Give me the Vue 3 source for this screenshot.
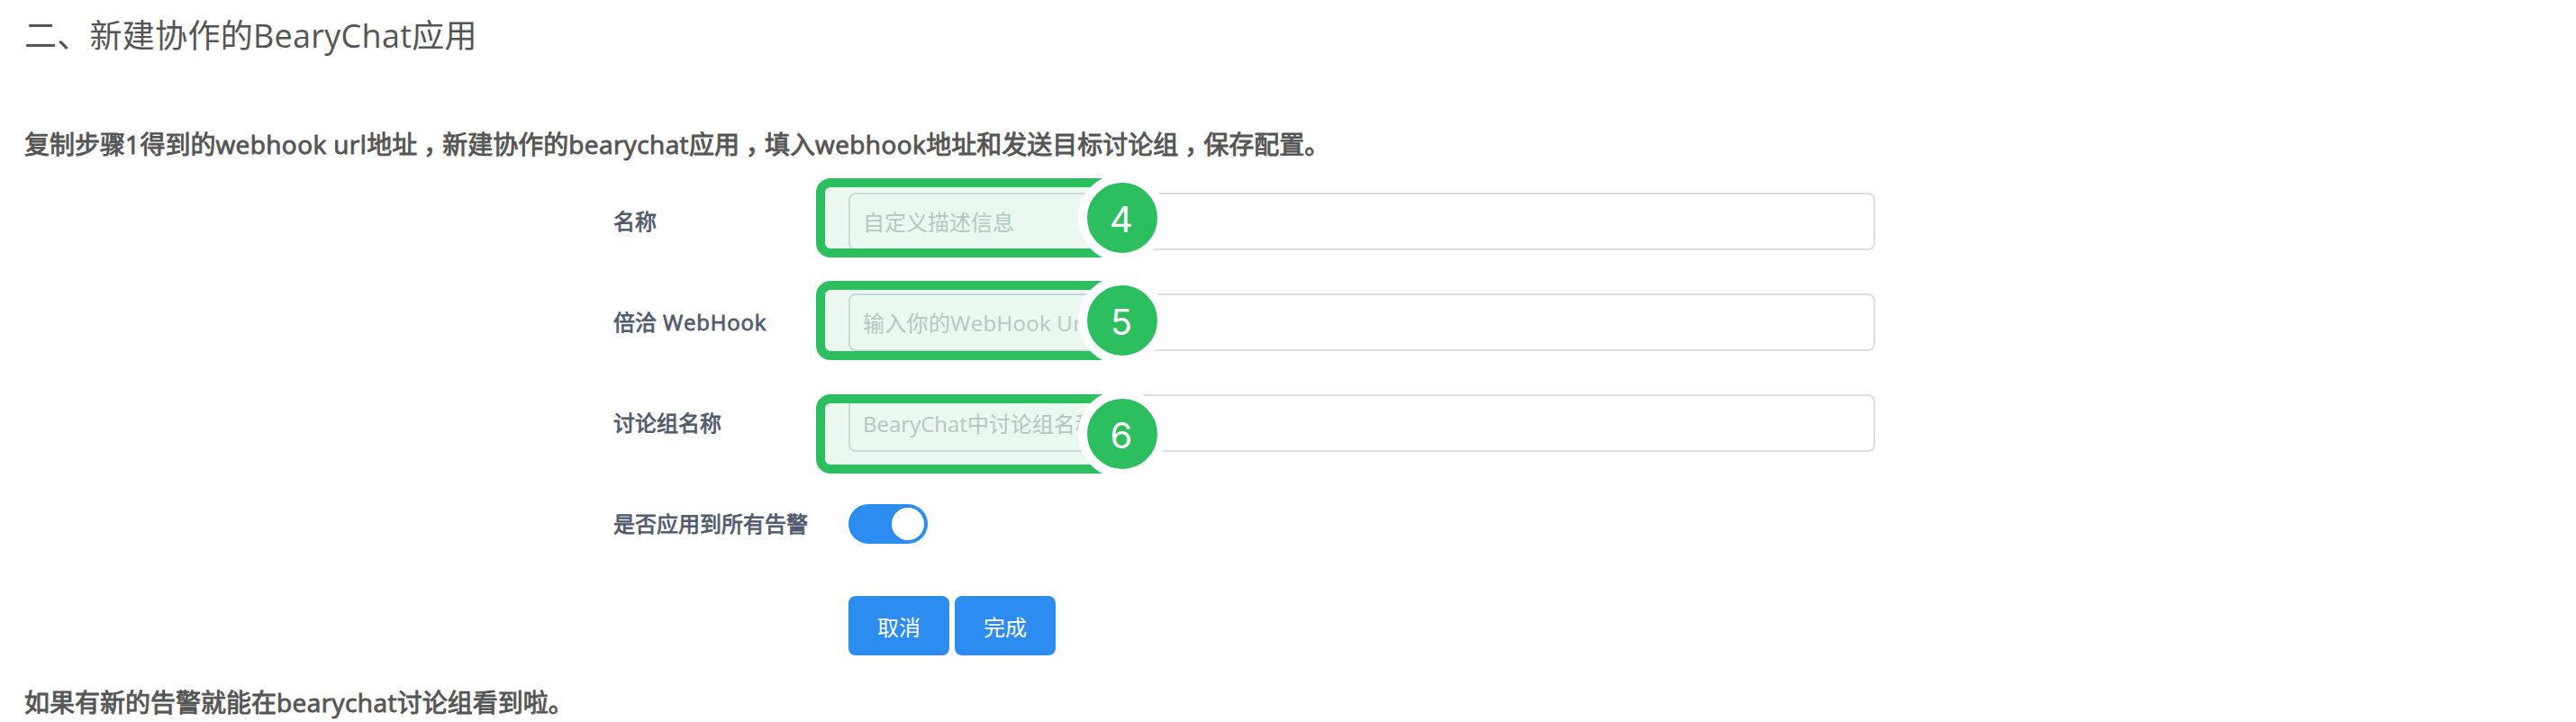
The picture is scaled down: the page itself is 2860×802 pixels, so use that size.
<script setup>
import { ref } from 'vue'

const fields = [
  { cjk: '名称', latin: '', placeholder: '自定义描述信息', step: 4 },
  { cjk: '倍洽', latin: ' WebHook', placeholder: '输入你的WebHook Url', step: 5 },
  { cjk: '讨论组名称', latin: '', placeholder: 'BearyChat中讨论组名称', step: 6 },
]
const applyAll = ref(true)
</script>

<template>
  <main class="page">
    <h2 class="title">二、新建协作的BearyChat应用</h2>
    <p class="note intro">复制步骤<span class="latin">1</span>得到的<span class="latin">webhook url</span>地址<span class="comma">，</span>新建协作的<span class="latin">bearychat</span>应用<span class="comma">，</span>填入<span class="latin">webhook</span>地址和发送目标讨论组<span class="comma">，</span>保存配置。</p>

    <form class="form" @submit.prevent>
      <div v-for="f in fields" :key="f.step" class="row">
        <label class="label">{{ f.cjk }}<span class="latin">{{ f.latin }}</span></label>
        <div class="control">
          <input class="input" :class="{ spaced: f.latin }" type="text" :placeholder="f.placeholder" />
          <div class="callout" :class="'step-' + f.step">
            <span class="badge">{{ f.step }}</span>
          </div>
        </div>
      </div>
      <div class="row">
        <label class="label">是否应用到所有告警</label>
        <button type="button" class="switch" :class="{ on: applyAll }" @click="applyAll = !applyAll">
          <span class="knob"></span>
        </button>
      </div>
      <div class="actions">
        <button type="button" class="btn">取消</button>
        <button type="button" class="btn">完成</button>
      </div>
    </form>

    <p class="note outro">如果有新的告警就能在<span class="latin">bearychat</span>讨论组看到啦。</p>
  </main>
</template>

<style>
body {
  margin: 0;
  background: #fff;
}
</style>

<style scoped>
.page {
  box-sizing: border-box;
  width: 2860px;
  height: 802px;
  padding: 20px 27px 0;
  overflow: hidden;
  background: #fff;
  color: #555;
  font-family: 'Open Sans', 'Noto Sans CJK SC', sans-serif;
  font-kerning: none;
}
.title {
  margin: 0;
  font-size: 36px;
  font-weight: 400;
  line-height: 40px;
  letter-spacing: 0.28px;
}
.note {
  margin: 0;
  font-size: 28px;
  line-height: 40px;
  white-space: nowrap;
  -webkit-text-stroke: 0.9px currentColor;
}
.note .latin {
  letter-spacing: 0.42px;
}
.intro {
  margin-top: 80px;
}
.comma {
  margin: 0 7px;
  font-feature-settings: 'halt';
}
.form {
  width: 1400px;
  margin: 34px 0 0 654px;
}
.row {
  display: grid;
  grid-template-columns: 261px 1140px;
  align-items: center;
  height: 64px;
  margin-bottom: 48px;
}
.label {
  color: #515a6e;
  font-size: 24px;
  line-height: 64px;
  white-space: pre;
  -webkit-text-stroke: 0.8px currentColor;
}
.label .latin {
  letter-spacing: 0.8px;
}
.control {
  position: relative;
  height: 64px;
}
.input {
  display: block;
  box-sizing: border-box;
  width: 100%;
  height: 64px;
  padding: 0 14px;
  border: 2px solid #dcdee2;
  border-radius: 8px;
  background: #fff;
  color: #515a6e;
  font: inherit;
  font-size: 24px;
  outline: none;
}
.input.spaced {
  letter-spacing: 0.3px;
}
.input::placeholder {
  color: #c5c8ce;
  opacity: 1;
}
.callout {
  position: absolute;
  left: -36px;
  box-sizing: border-box;
  width: 340px;
  height: 88px;
  border: 10px solid #2dbe60;
  border-radius: 16px;
  background: rgba(45, 190, 96, 0.1);
  background-clip: padding-box;
  pointer-events: none;
}
.step-4 {
  top: -16px;
}
.step-5 {
  top: -14px;
}
.step-6 {
  top: 0;
}
.badge {
  position: absolute;
  top: -15px;
  right: -59px;
  box-sizing: border-box;
  width: 98px;
  height: 98px;
  padding-right: 2px;
  border: 10px solid #fff;
  border-radius: 50%;
  background: #2dbe60;
  color: #fff;
  font-family: Inter, 'Liberation Sans', sans-serif;
  font-size: 40px;
  line-height: 82px;
  text-align: center;
}
.switch {
  display: flex;
  box-sizing: border-box;
  width: 88px;
  height: 44px;
  padding: 4px;
  border: 0;
  border-radius: 22px;
  background: #c5c8ce;
}
.switch.on {
  justify-content: flex-end;
  background: #2d8cf0;
}
.knob {
  width: 36px;
  height: 36px;
  border-radius: 50%;
  background: #fff;
}
.actions {
  display: flex;
  gap: 6px;
  padding-left: 261px;
}
.btn {
  width: 112px;
  height: 66px;
  padding: 4px 0 0;
  border: 0;
  border-radius: 8px;
  background: #2d8cf0;
  color: #fff;
  font-family: inherit;
  font-size: 24px;
  line-height: 62px;
}
.outro {
  margin-top: 32px;
}
</style>
